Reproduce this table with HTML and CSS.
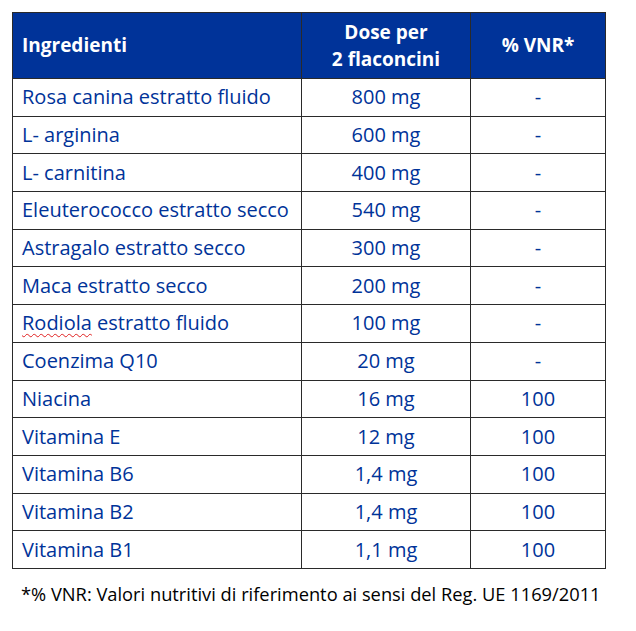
FILE: index.html
```html
<!DOCTYPE html>
<html lang="it">
<head>
<meta charset="utf-8">
<title>Ingredienti</title>
<link rel="stylesheet" href="styles.css">
</head>
<body>
<div class="page">
  <table class="nutri">
    <colgroup>
      <col class="c1">
      <col class="c2">
      <col class="c3">
    </colgroup>
    <thead>
      <tr>
        <th class="left">Ingredienti</th>
        <th>Dose per<br>2 flaconcini</th>
        <th>% VNR*</th>
      </tr>
    </thead>
    <tbody>
      <tr><td class="left">Rosa canina estratto fluido</td><td>800 mg</td><td>-</td></tr>
      <tr><td class="left">L- arginina</td><td>600 mg</td><td>-</td></tr>
      <tr><td class="left">L- carnitina</td><td>400 mg</td><td>-</td></tr>
      <tr><td class="left">Eleuterococco estratto secco</td><td>540 mg</td><td>-</td></tr>
      <tr><td class="left">Astragalo estratto secco</td><td>300 mg</td><td>-</td></tr>
      <tr><td class="left">Maca estratto secco</td><td>200 mg</td><td>-</td></tr>
      <tr><td class="left"><span class="spell">Rodiola</span> estratto fluido</td><td>100 mg</td><td>-</td></tr>
      <tr><td class="left">Coenzima Q10</td><td>20 mg</td><td>-</td></tr>
      <tr><td class="left">Niacina</td><td>16 mg</td><td>100</td></tr>
      <tr><td class="left">Vitamina E</td><td>12 mg</td><td>100</td></tr>
      <tr><td class="left">Vitamina B6</td><td>1,4 mg</td><td>100</td></tr>
      <tr><td class="left">Vitamina B2</td><td>1,4 mg</td><td>100</td></tr>
      <tr><td class="left">Vitamina B1</td><td>1,1 mg</td><td>100</td></tr>
    </tbody>
  </table>
  <p class="note">*% VNR: Valori nutritivi di riferimento ai sensi del Reg. UE 1169/2011</p>
</div>
</body>
</html>
```

FILE: styles.css
```css
html, body {
  margin: 0;
  padding: 0;
  background: #ffffff;
}

body {
  font-family: "Open Sans", Lato, "Liberation Sans", sans-serif;
  font-size: 18.3px;
}

.page {
  padding: 12px 0 0 12px;
}

.nutri {
  border-collapse: collapse;
  table-layout: fixed;
  width: 593px;
  border: 1px solid #222222;
}

.c1 { width: 289px; }
.c2 { width: 169px; }
.c3 { width: 135px; }

.nutri th,
.nutri td {
  border: 1px solid #2a2a2a;
  padding: 0;
  text-align: center;
  vertical-align: middle;
}

.nutri thead tr {
  height: 66px;
}

.nutri th {
  background: #003399;
  color: #ffffff;
  font-size: 19px;
  font-weight: 700;
  line-height: 27px;
}

.nutri tbody tr {
  height: 37.7px;
}

.nutri td {
  color: #003399;
  font-size: 20px;
  line-height: 22px;
}

.nutri .left {
  text-align: left;
  padding-left: 9px;
}

.spell {
  text-decoration: underline wavy #e02020;
  text-decoration-thickness: 1px;
  text-underline-offset: 3px;
}

.note {
  margin: 14px 0 0 9px;
  color: #000000;
  line-height: 22px;
}
```
